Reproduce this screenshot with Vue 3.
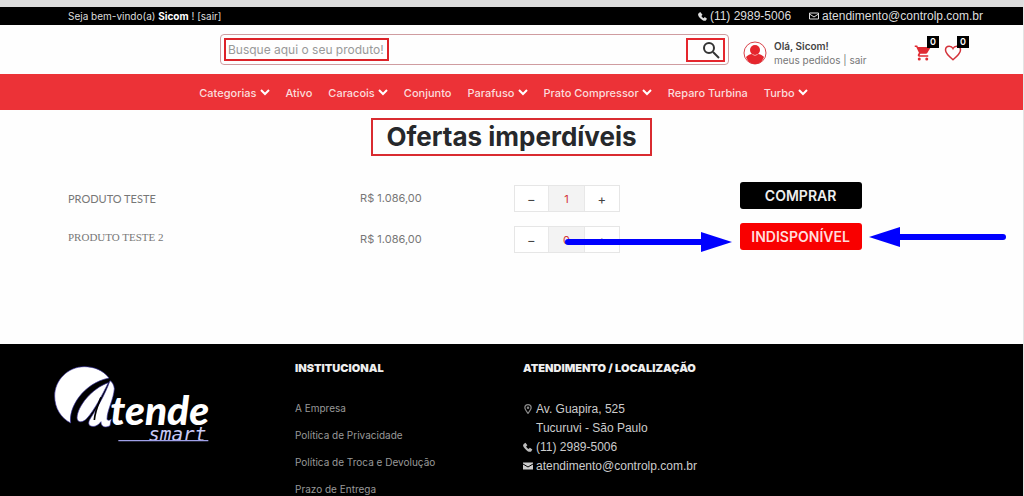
<script setup>
import { reactive } from 'vue'

const menu = [
  { name: 'Categorias', sub: true },
  { name: 'Ativo', sub: false },
  { name: 'Caracois', sub: true },
  { name: 'Conjunto', sub: false },
  { name: 'Parafuso', sub: true },
  { name: 'Prato Compressor', sub: true },
  { name: 'Reparo Turbina', sub: false },
  { name: 'Turbo', sub: true }
]

const products = reactive([
  { name: 'PRODUTO TESTE', price: 'R$ 1.086,00', qty: 1, available: true },
  { name: 'PRODUTO TESTE 2', price: 'R$ 1.086,00', qty: 0, available: false }
])

const links = ['A Empresa', 'Política de Privacidade', 'Política de Troca e Devolução', 'Prazo de Entrega']
</script>

<template>
  <div class="page">
    <div class="topbar">
      <p class="welcome">Seja bem-vindo(a) <b>Sicom</b> ! <a class="leave" href="#">[sair]</a></p>
      <div class="top-contact">
        <a href="#">
          <svg width="9" height="9" viewBox="0 0 16 16"><path fill="currentColor" d="M1 2 4 0l4 5-2 2c1 2 2 3 4 4l2-2 4 3-2 3c-1 1-3 1-5 0C5 13 1 9 0 5Z" /></svg>
          (11) 2989-5006
        </a>
        <a href="#">
          <svg width="10" height="8" viewBox="0 0 20 14" fill="none" stroke="currentColor" stroke-width="2"><path d="M1 1h18v12H1zM1 3l9 6 9-6" /></svg>
          atendimento@controlp.com.br
        </a>
      </div>
    </div>

    <header class="header">
      <form class="search" @submit.prevent>
        <input class="search-input" type="text" aria-label="Buscar produto" placeholder="Busque aqui o seu produto!" />
        <button class="search-btn" type="submit" aria-label="Buscar">
          <svg width="18" height="18" viewBox="0 0 18 18" fill="none" stroke="#333" stroke-width="2"><circle cx="7" cy="7" r="5" /><path d="m11 11 6 6" /></svg>
        </button>
      </form>
      <div class="account">
        <svg width="24" height="24" viewBox="0 0 24 24">
          <circle cx="12" cy="12" r="11" fill="#fff" stroke="#d9434a" stroke-width="1" />
          <circle cx="12" cy="9" r="5" fill="#e5262d" />
          <path fill="#e5262d" d="M3 16c2-2 4-3 6-3 2 2 4 2 6 0 2 0 4 1 6 3-2 5-5 7-9 7s-7-2-9-7Z" />
        </svg>
        <div class="account-text">
          <strong>Olá, Sicom!</strong>
          <span><a href="#">meus pedidos</a> | <a href="#">sair</a></span>
        </div>
        <a class="icon-link" href="#" aria-label="Carrinho">
          <svg width="18" height="18" viewBox="0 0 24 24"><path fill="#e02b33" d="M7 18a2 2 0 1 0 0 4 2 2 0 0 0 0-4ZM1 2v2h2l3.600 7.600L5.200 14C4.500 15.400 5.500 17 7 17h12v-2H7.400l1.100-2h7.500c.8 0 1.400-.4 1.700-1L21.900 5c.3-.6-.1-1-.9-1H5.200L4.300 2H1Zm16 16a2 2 0 1 0 0 4 2 2 0 0 0 0-4Z" /></svg>
          <span class="badge">0</span>
        </a>
        <a class="icon-link" href="#" aria-label="Favoritos">
          <svg width="18" height="18" viewBox="0 0 24 24"><path fill="none" stroke="#d3323a" stroke-width="2" d="M12 21C6 16 2 12 2 8c0-3 2-5 5-5 2 0 4 1 5 3 1-2 3-3 5-3 3 0 5 2 5 5 0 4-4 8-10 13Z" /></svg>
          <span class="badge">0</span>
        </a>
      </div>
    </header>

    <nav class="nav">
      <a v-for="item in menu" :key="item.name" href="#">
        {{ item.name }}
        <svg v-if="item.sub" width="10" height="7" viewBox="0 0 10 7"><path d="m1 1 4 4 4-4" fill="none" stroke="#fff" stroke-width="2" /></svg>
      </a>
    </nav>

    <main class="main">
      <h1 class="title">Ofertas imperdíveis</h1>
      <table class="products">
        <tbody>
          <tr v-for="p in products" :key="p.name">
            <td class="name" :class="{ serif: !p.available }">{{ p.name }}</td>
            <td class="price">{{ p.price }}</td>
            <td class="qty">
              <div class="stepper">
                <button type="button" :aria-label="'Diminuir ' + p.name" @click="p.qty = Math.max(0, p.qty - 1)">−</button>
                <input v-model.number="p.qty" type="text" :aria-label="'Quantidade ' + p.name" />
                <button type="button" :aria-label="'Aumentar ' + p.name" @click="p.qty++">+</button>
              </div>
            </td>
            <td class="action">
              <button type="button" class="buy" :class="{ off: !p.available }">{{ p.available ? 'COMPRAR' : 'INDISPONÍVEL' }}</button>
            </td>
          </tr>
        </tbody>
      </table>
      <svg class="arrow arrow-right" width="168" height="20" viewBox="0 0 168 20">
        <path d="M4 10h134" stroke="#00f" stroke-width="6" stroke-linecap="round" /><path d="M137 0v20l31-10Z" fill="#00f" />
      </svg>
      <svg class="arrow arrow-left" width="138" height="20" viewBox="0 0 138 20">
        <path d="M134 10H30" stroke="#00f" stroke-width="6" stroke-linecap="round" /><path d="M31 0v20L0 10Z" fill="#00f" />
      </svg>
    </main>

    <footer class="footer">
      <svg class="logo" width="158" height="80" viewBox="40 75 474 240" role="img" aria-label="Atende smart">
        <g fill="#fff" stroke="#3b35a0" stroke-width="2">
          <path d="M208 114C190 90 162 80 134 80 85 80 45 120 45 168c0 37 19 66 48 81C86 203 130 130 208 114Z" />
          <path d="M206 128C157 145 113 198 112 234c2 16 18 14 30 1 22-25 44-67 64-107Z" />
          <path d="M211 122c6 3 12 12 13 24-2 32-22 65-22 91 2 6 7 4 13 0l-4 20c-13 7-27 5-27-12-9 12-21 17-31 13-9-4-6-15 0-24 20-31 43-70 58-112Z" />
        </g>
        <path d="M184 172c-9 22-18 42-20 68" fill="none" stroke="#000" stroke-width="5" />
        <text class="logo-main" x="212" y="255">tende</text>
        <text class="logo-sub" x="500" y="302" text-anchor="end">smart</text>
        <path d="M236 302h270" stroke="#9fa0e8" stroke-width="4" />
      </svg>
      <section class="col">
        <h2>INSTITUCIONAL</h2>
        <ul class="links">
          <li v-for="l in links" :key="l"><a href="#">{{ l }}</a></li>
        </ul>
      </section>
      <section class="col">
        <h2>ATENDIMENTO / LOCALIZAÇÃO</h2>
        <address class="contact">
          <svg width="10" height="10" viewBox="0 0 16 16"><path fill="none" stroke="#888" stroke-width="2" d="M8 15C5 11 3 8 3 6a5 5 0 0 1 10 0c0 2-2 5-5 9Z" /><circle cx="8" cy="6" r="2" fill="#888" /></svg>
          <span>Av. Guapira, 525<br />Tucuruvi - São Paulo</span>
          <svg width="10" height="10" viewBox="0 0 16 16"><path fill="#bbb" d="M1 3 4 1l3 4-2 2c1 2 2 3 4 4l2-2 4 3-2 3c-1 1-3 1-5 0C5 13 1 9 0 6Z" /></svg>
          <a href="#">(11) 2989-5006</a>
          <svg width="10" height="10" viewBox="0 0 20 20"><path fill="#ccc" d="M0 3h20v14H0z" /><path d="m0 6 10 6 10-6" fill="none" stroke="#000" stroke-width="2" /></svg>
          <a href="#">atendimento@controlp.com.br</a>
        </address>
      </section>
    </footer>
  </div>
</template>

<style>
body {
  margin: 0;
  background: #fefefe;
}
</style>

<style scoped>
.page {
  display: flex;
  flex-direction: column;
  min-height: 100vh;
  box-sizing: border-box;
  border-top: 7px solid #ddd;
  border-right: 1px solid #e4e4e4;
  background: #fefefe;
  font-family: Inter, "Liberation Sans", sans-serif;
  font-size: 11px;
  color: #777;
}
a {
  color: inherit;
  text-decoration: none;
}
button,
input {
  font: inherit;
  padding: 0;
  margin: 0;
  box-sizing: border-box;
}
svg {
  flex: none;
  display: block;
}
.topbar {
  display: flex;
  justify-content: space-between;
  align-items: center;
  height: 18px;
  padding: 0 40px 0 68px;
  background: #000;
  color: #ddd;
}
.welcome {
  margin: 0;
  font-size: 10px;
}
.welcome b {
  color: #fff;
}
.top-contact {
  display: flex;
  gap: 18px;
  font: 12px "Liberation Sans", sans-serif;
}
.top-contact a {
  display: flex;
  align-items: center;
  gap: 3px;
}
.header {
  display: grid;
  grid-template-columns: 509fr 280fr;
  column-gap: 14px;
  align-items: start;
  height: 49px;
  box-sizing: border-box;
  padding: 9px 0 0 21.5%;
}
.search {
  display: flex;
  justify-content: space-between;
  align-items: center;
  height: 31px;
  box-sizing: border-box;
  padding: 0 3px;
  border: 1px solid #cf9ca0;
  border-radius: 4px;
}
.search-input {
  width: 165px;
  height: 23px;
  border: 2px solid #dd2228;
  padding: 0 2px;
  background: transparent;
  font-size: 12px;
}
.search-input::placeholder {
  color: #999;
  opacity: 1;
}
.search-btn {
  display: flex;
  align-items: center;
  justify-content: flex-end;
  width: 39px;
  height: 24px;
  padding-right: 3px;
  border: 2px solid #e5262d;
  background: transparent;
}
.account {
  display: flex;
  align-items: center;
  gap: 7px;
  padding-top: 5px;
}
.account-text {
  display: flex;
  flex-direction: column;
  width: 133px;
  font-size: 10px;
  line-height: 14px;
  white-space: nowrap;
}
.account-text strong {
  color: #444;
  font-weight: 600;
}
.icon-link {
  position: relative;
  margin-right: 5px;
}
.badge {
  position: absolute;
  left: 13px;
  top: -8px;
  width: 12px;
  height: 12px;
  background: #000;
  color: #fff;
  font-size: 9px;
  line-height: 12px;
  font-weight: 600;
  text-align: center;
}
.nav {
  display: flex;
  justify-content: center;
  align-items: center;
  gap: 16px;
  height: 36px;
  padding: 1px 16px 0 0;
  box-sizing: border-box;
  background: #ec3237;
  color: #fbdcdc;
  font-weight: 500;
}
.nav a {
  display: flex;
  align-items: center;
  gap: 3px;
  white-space: nowrap;
}
.main {
  position: relative;
  flex: 1;
  display: flex;
  flex-direction: column;
  align-items: center;
  padding-top: 8px;
}
.title {
  margin: 0 0 26px;
  padding: 0 13px;
  border: 2px solid #d92b30;
  color: #26282b;
  font-size: 26px;
  line-height: 34px;
  font-weight: 700;
}
.products {
  width: 100%;
  border-collapse: collapse;
  table-layout: fixed;
}
.products td {
  height: 41px;
  box-sizing: border-box;
  padding: 0;
  vertical-align: top;
}
.products .name {
  width: 35.2%;
  padding-left: 68px;
  font-family: Lato, sans-serif;
  font-size: 11px;
  line-height: 33px;
}
.products .serif {
  font-family: "Liberation Serif", serif;
  line-height: 29px;
}
.products .price {
  width: 15%;
  line-height: 33px;
}
.products .qty {
  width: 22.1%;
  padding-top: 3px;
}
.stepper {
  display: flex;
  width: 106px;
  height: 27px;
  box-sizing: border-box;
  border: 1px solid #e6e6e6;
}
.stepper button {
  flex: 1;
  border: 0;
  background: #fff;
  color: #444;
  font-size: 13px;
}
.stepper input {
  width: 37px;
  border: 0;
  border-left: 1px solid #e8e8e8;
  border-right: 1px solid #e8e8e8;
  border-radius: 0;
  background: #f3f3f3;
  color: #d3343a;
  text-align: center;
}
.buy {
  width: 122px;
  height: 27px;
  border: 0;
  border-radius: 3px;
  background: #000;
  color: #eee;
  font-size: 14px;
  font-weight: 600;
}
.buy.off {
  background: #f90000;
  color: #ffdcdc;
}
.arrow {
  position: absolute;
  pointer-events: none;
}
.arrow-right {
  left: 55.1%;
  top: 122px;
}
.arrow-left {
  left: 84.9%;
  top: 117px;
}
.footer {
  display: grid;
  grid-template-columns: 242fr 228fr 500fr;
  padding: 17px 0 0 53px;
  background: #000;
  color: #999;
}
.logo {
  margin-top: 4px;
}
.logo-main {
  font: italic 900 122px Lato, sans-serif;
  fill: #fff;
}
.logo-sub {
  font: italic 58px "DejaVu Sans Mono", monospace;
  fill: #c9caf5;
}
.col h2 {
  margin: 0 0 25px;
  color: #eee;
  font-size: 11px;
  line-height: 14px;
  font-weight: 900;
}
.links {
  display: flex;
  flex-direction: column;
  gap: 14px;
  margin: 0;
  padding: 2px 0 0;
  list-style: none;
  font-size: 10px;
  line-height: 13px;
}
.contact {
  display: grid;
  grid-template-columns: 10px auto;
  column-gap: 3px;
  font: 12px/19px "Liberation Sans", sans-serif;
  color: #ccc;
}
.contact svg {
  margin-top: 4px;
}
</style>
